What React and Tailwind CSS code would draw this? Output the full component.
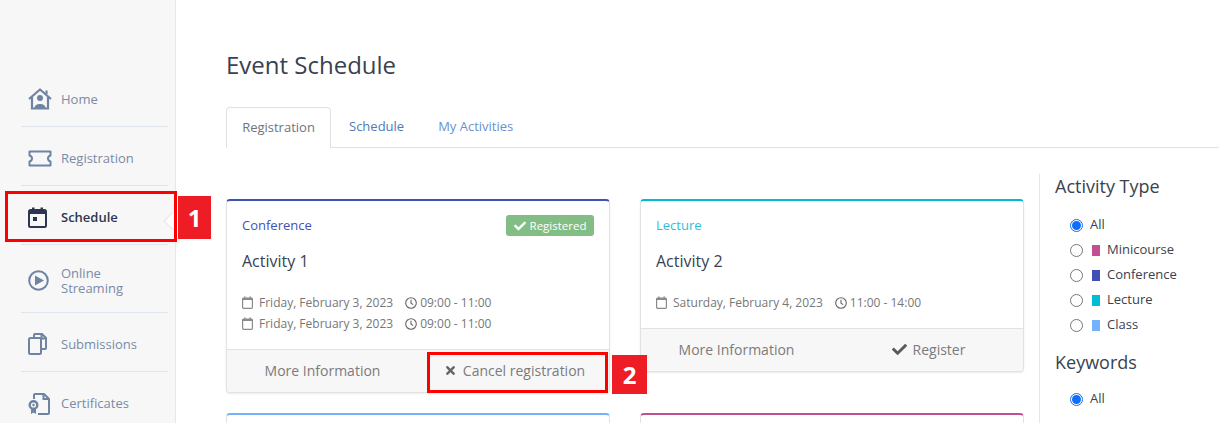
import React from 'react';
import { FaCheck, FaTimes } from 'react-icons/fa';

const font = { fontFamily: '"Open Sans", sans-serif' };

function HomeIcon() {
  return (
    <svg width="24" height="22" viewBox="0 0 24 22" fill="none" stroke="#6f83a3" strokeWidth="2.2">
      <path d="M1 11 L12 1.5 L23 11" strokeLinejoin="round" />
      <path d="M18.5 2.5 V6" />
      <path d="M4 9 V20.5 H20 V9" />
      <circle cx="12" cy="10" r="3" fill="#6f83a3" stroke="none" />
      <path d="M6.5 20 C6.5 14.5 17.5 14.5 17.5 20 Z" fill="#6f83a3" stroke="none" />
    </svg>
  );
}

function TicketIcon() {
  return (
    <svg width="24" height="17" viewBox="0 0 24 17" fill="none" stroke="#6f83a3" strokeWidth="2">
      <path d="M1.5 1.5 H22.5 V5.5 C20.5 6 20 7 20 8.5 C20 10 20.5 11 22.5 11.5 V15.5 H1.5 V11.5 C3.5 11 4 10 4 8.5 C4 7 3.5 6 1.5 5.5 Z" strokeLinejoin="round" />
    </svg>
  );
}

function ScheduleIcon() {
  return (
    <svg width="19" height="21" viewBox="0 0 19 21" fill="none">
      <rect x="1" y="3" width="17" height="17" rx="1.5" stroke="#2c3650" strokeWidth="2" />
      <rect x="1" y="3" width="17" height="4" fill="#2c3650" />
      <rect x="4" y="0.5" width="2.5" height="4" fill="#2c3650" />
      <rect x="12.5" y="0.5" width="2.5" height="4" fill="#2c3650" />
      <rect x="5" y="10" width="4" height="4" fill="#2c3650" />
    </svg>
  );
}

function PlayIcon() {
  return (
    <svg width="21" height="21" viewBox="0 0 21 21" fill="none">
      <circle cx="10.5" cy="10.5" r="9.3" stroke="#6f83a3" strokeWidth="2" />
      <path d="M7 5.5 L16 10.5 L7 15.5 Z" fill="#6f83a3" />
    </svg>
  );
}

function CopyIcon() {
  return (
    <svg width="19" height="22" viewBox="0 0 19 22" fill="none" stroke="#6f83a3" strokeWidth="2">
      <path d="M6 4 V2 Q6 1 7 1 H14 L18 5 V15 Q18 16 17 16 H13" strokeLinejoin="round" />
      <rect x="1" y="5" width="12" height="16" rx="1.5" />
      <path d="M13.5 1.5 V5.5 H18" />
    </svg>
  );
}

function CertificateIcon() {
  return (
    <svg width="22" height="22" viewBox="0 0 22 22" fill="none" stroke="#6f83a3" strokeWidth="2">
      <path d="M6 6 V2 Q6 1 7 1 H16 L21 6 V20 Q21 21 20 21 H10" strokeLinejoin="round" />
      <path d="M15.5 1.5 V6 H21" />
      <circle cx="5.5" cy="12" r="3.8" strokeWidth="2.4" />
      <circle cx="5.5" cy="12" r="1.2" fill="#6f83a3" stroke="none" />
      <path d="M3 16 V21 L5.5 19.5 L8 21 V16" fill="#6f83a3" stroke="none" />
    </svg>
  );
}

function SmallCalendar() {
  return (
    <svg width="11" height="13" viewBox="0 0 11 13" fill="none" className="shrink-0">
      <rect x="0.6" y="2.1" width="9.8" height="10.2" rx="1" stroke="#8a8a8a" strokeWidth="1.2" />
      <rect x="0.6" y="2.1" width="9.8" height="1.9" fill="#8a8a8a" />
      <rect x="2.2" y="0.4" width="1.3" height="2.4" fill="#8a8a8a" />
      <rect x="7.5" y="0.4" width="1.3" height="2.4" fill="#8a8a8a" />
    </svg>
  );
}

function SmallClock() {
  return (
    <svg width="12" height="12" viewBox="0 0 12 12" fill="none" stroke="#666" strokeWidth="1.1" className="shrink-0">
      <circle cx="6" cy="6" r="5.3" />
      <path d="M6 2.8 V6.2 L8.2 7.6" />
    </svg>
  );
}

const navItems = [
  { label: 'Home', icon: <HomeIcon /> },
  { label: 'Registration', icon: <TicketIcon /> },
  { label: 'Schedule', icon: <ScheduleIcon />, active: true },
  { label: 'Online Streaming', icon: <PlayIcon />, tall: true },
  { label: 'Submissions', icon: <CopyIcon /> },
  { label: 'Certificates', icon: <CertificateIcon />, last: true },
];

function NavItem({ item }) {
  return (
    <div
      className={`relative ml-[21px] mr-[7px] flex items-center border-b border-[#dfe5ec] pt-[4px] pl-[7px] ${item.tall ? 'h-[68px]' : 'h-[59px]'} ${item.last ? 'border-b-0' : ''}`}
    >
      <div className="flex w-[33px] shrink-0 items-center">{item.icon}</div>
      <span
        className={`text-[13px] leading-[15px] ${item.active ? 'font-semibold text-[#2c3650]' : 'text-[#7a8ba6]'} ${item.tall ? 'w-[80px]' : ''}`}
      >
        {item.label}
      </span>
      {item.active && (
        <div className="absolute right-[-10px] top-[29px] h-[12px] w-[12px] rotate-45 border-b border-l border-[#dfe5ec] bg-white" />
      )}
    </div>
  );
}

function DateRow({ date, time }) {
  return (
    <div className="flex h-[21px] items-center text-[12px] text-[#777]">
      <SmallCalendar />
      <span className="ml-[6px]">{date}</span>
      <span className="ml-[12px]"><SmallClock /></span>
      <span className="ml-[3px]">{time}</span>
    </div>
  );
}

function ActivityCard({ category, categoryClass, topClass, title, dates, registered, action, actionIcon }) {
  return (
    <div className={`overflow-hidden rounded-[4px] border border-t-2 border-[#e2e2e2] bg-white shadow-[0_1px_2px_rgba(0,0,0,0.08)] ${topClass}`}>
      <div className="px-[15px] pt-[14px] pb-[15px]">
        <div className="flex h-[21px] items-center justify-between">
          <span className={`pt-[1px] text-[13px] ${categoryClass}`}>{category}</span>
          {registered && (
            <span className="flex h-[21px] w-[88px] items-center justify-center gap-[4px] rounded-[3px] bg-[#82bd84] text-[11.5px] text-white">
              <FaCheck size={12} />
              Registered
            </span>
          )}
        </div>
        <div className="mt-[13px] text-[16px] leading-[24px] text-[#39424e]">{title}</div>
        <div className="mt-[19px]">
          {dates.map((d, i) => (
            <DateRow key={i} date={d.date} time={d.time} />
          ))}
        </div>
      </div>
      <div className="grid h-[43px] grid-cols-2 border-t border-[#e2e2e2] bg-[#f7f7f7] pb-[2px] text-[14px] text-[#7b7b7b]">
        <div className="flex items-center justify-center">More Information</div>
        <div className="flex items-center justify-center gap-[6px] pl-[2px]">
          {actionIcon}
          {action}
        </div>
      </div>
    </div>
  );
}

function Radio({ checked }) {
  return checked ? (
    <span className="flex h-[13px] w-[13px] shrink-0 items-center justify-center rounded-full border border-[#0d6efd] bg-white">
      <span className="h-[9px] w-[9px] rounded-full bg-[#0d6efd]" />
    </span>
  ) : (
    <span className="h-[13px] w-[13px] shrink-0 rounded-full border border-[#767676] bg-white" />
  );
}

function FilterRow({ label, checked, swatch }) {
  return (
    <div className="flex h-[25px] items-center pl-[15px] text-[13px] text-[#39424e]">
      <Radio checked={checked} />
      {swatch ? <span className={`ml-[9px] mr-[7px] h-[11px] w-[8px] ${swatch}`} /> : <span className="ml-[7px]" />}
      <span className="pb-[2px]">{label}</span>
    </div>
  );
}

export default function App() {
  return (
    <div className="relative flex h-[423px] w-[1219px] overflow-hidden bg-white" style={font}>
      {/* Sidebar */}
      <aside className="h-full w-[176px] shrink-0 border-r border-[#e3e8ef] bg-[#f7f7f7] pt-[68px]">
        {navItems.map((item) => (
          <NavItem key={item.label} item={item} />
        ))}
      </aside>

      {/* Main */}
      <main className="min-w-0 flex-1 pl-[50px]">
        <h1 className="mt-[48px] text-[24px] leading-[34px] text-[#39424e]">Event Schedule</h1>

        {/* Tabs */}
        <div className="mt-[25px] flex h-[41px] border-b border-[#dee2e6] text-[13px]">
          <div className="flex h-[41px] w-[105px] items-center justify-center rounded-t-[4px] border border-b-0 border-[#dee2e6] bg-white text-[#6c757d]">
            Registration
          </div>
          <div className="flex h-[40px] items-center pl-[18px] text-[#4f7cb5]">Schedule</div>
          <div className="flex h-[40px] items-center pl-[34px] text-[#6a93cc]">My Activities</div>
        </div>

        <div className="mt-[26px] flex">
          {/* Cards */}
          <div className="grid w-[798px] shrink-0 grid-cols-[384px_384px] items-start gap-x-[30px] gap-y-[20px] pt-[25px]">
            <ActivityCard
              category="Conference"
              categoryClass="text-[#3f51b5]"
              topClass="border-t-[#3f51b5]"
              title="Activity 1"
              registered
              dates={[
                { date: 'Friday, February 3, 2023', time: '09:00 - 11:00' },
                { date: 'Friday, February 3, 2023', time: '09:00 - 11:00' },
              ]}
              action="Cancel registration"
              actionIcon={<FaTimes size={13} className="text-[#666]" />}
            />
            <ActivityCard
              category="Lecture"
              categoryClass="text-[#2bbfd9]"
              topClass="border-t-[#00bcd4]"
              title="Activity 2"
              dates={[{ date: 'Saturday, February 4, 2023', time: '11:00 - 14:00' }]}
              action="Register"
              actionIcon={<FaCheck size={15} className="text-[#5a5a5a]" />}
            />
            <div className="h-[40px] rounded-[4px] border border-t-2 border-[#e2e2e2] border-t-[#74b3fb] bg-white" />
            <div className="h-[40px] rounded-[4px] border border-t-2 border-[#e2e2e2] border-t-[#c0508f] bg-white" />
          </div>

          {/* Filters */}
          <div className="ml-[15px] h-[260px] flex-1 border-l border-[#e6e6e6] pl-[15px]">
            <div className="mt-[-1px] text-[18px] leading-[26px] text-[#39424e]">Activity Type</div>
            <div className="mt-[14px]">
              <FilterRow label="All" checked />
              <FilterRow label="Minicourse" swatch="bg-[#c0508f]" />
              <FilterRow label="Conference" swatch="bg-[#3f51b5]" />
              <FilterRow label="Lecture" swatch="bg-[#00bcd4]" />
              <FilterRow label="Class" swatch="bg-[#74b3fb]" />
            </div>
            <div className="mt-[11px] text-[18px] leading-[26px] text-[#39424e]">Keywords</div>
            <div className="mt-[12px]">
              <FilterRow label="All" checked />
            </div>
          </div>
        </div>
      </main>

      {/* Annotations */}
      <div className="absolute left-[5px] top-[191px] h-[51px] w-[172px] border-[3px] border-[#ff0000]" />
      <div className="absolute left-[178px] top-[196px] flex h-[43px] w-[33px] items-center justify-center bg-[#ee1c25] text-[24px] font-bold text-white">1</div>
      <div className="absolute left-[427px] top-[352px] h-[41px] w-[181px] border-[3px] border-[#ff0000]" />
      <div className="absolute left-[612px] top-[355px] flex h-[39px] w-[35px] items-center justify-center bg-[#ee1c25] text-[24px] font-bold text-white">2</div>
    </div>
  );
}
